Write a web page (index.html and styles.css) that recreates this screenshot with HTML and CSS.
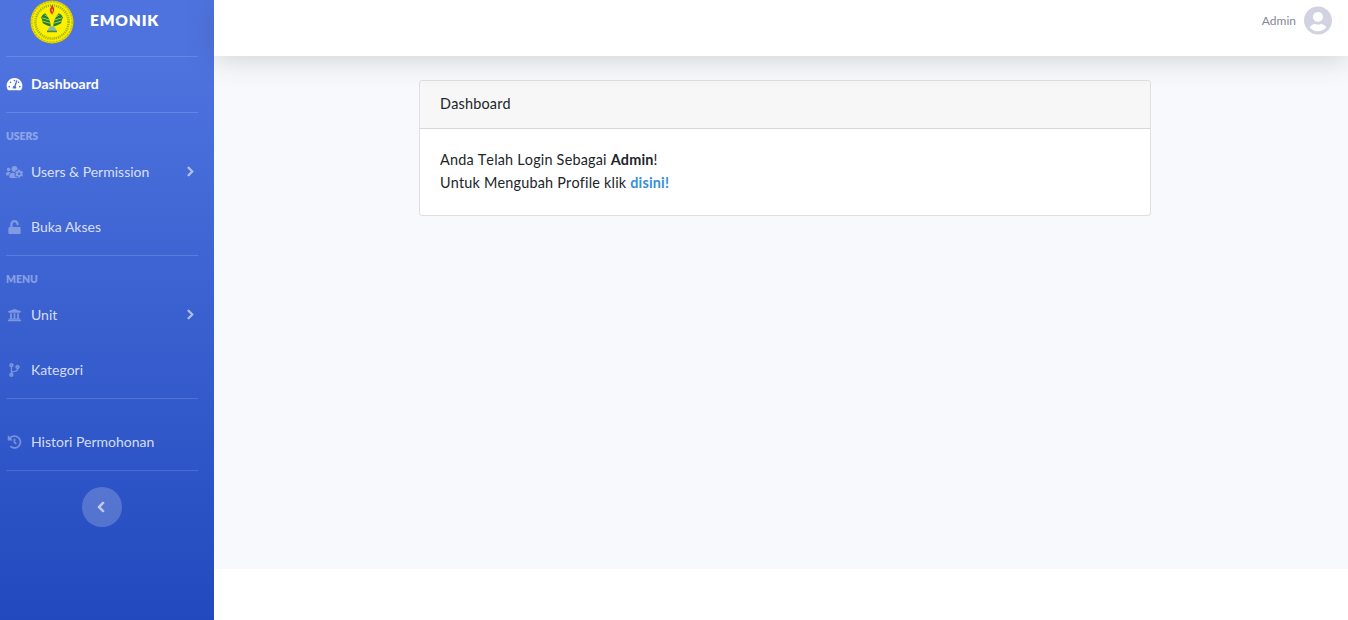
FILE: index.html
```html
<!DOCTYPE html>
<html lang="id">
<head>
<meta charset="utf-8">
<title>EMONIK</title>
<link rel="stylesheet" href="styles.css">
</head>
<body>
<div class="app">
  <aside class="sidebar">
    <a class="brand" href="#">
      <svg class="logo" viewBox="0 0 44 44" aria-hidden="true">
        <circle cx="22" cy="22" r="21.5" fill="#e3d800"/>
        <circle cx="22" cy="22" r="20.2" fill="#f7ec00" stroke="#cfc400" stroke-width="1.6" stroke-dasharray="2 1.2"/>
        <circle cx="22" cy="22" r="16.6" fill="none" stroke="#6f9a2c" stroke-width="2.4" stroke-dasharray="1.1 1" opacity=".7"/>
        <circle cx="22" cy="22" r="14.800" fill="#fdf000"/>
        <path d="M22 4.800c1.800 2.500 3 4.700 1.800 6.800-.6 1-1.200 2-1.500 3.200-1.500-1.500-2.900-3.200-2.400-5.200.3-1.600 1.600-3 2.100-4.800z" fill="#d9322a"/>
        <path d="M22 8.500c.8 1.200 1.100 2.400.3 3.500-.5-.7-1.100-1.700-.3-3.500z" fill="#f7ec00"/>
        <path d="M20.800 26.500c-.2-4.800-2-9.500-5.500-13.300-2.300 1-3.700 2.600-4.300 4.700 1.200.4 1.200 3.900 2 5.300 2.300 1.500 5.100 2.600 7.800 3.300z" fill="#1d7d3c"/>
        <path d="M23.200 26.500c.2-4.800 2-9.500 5.500-13.300 2.300 1 3.700 2.600 4.300 4.700-1.200.4-1.200 3.900-2 5.300-2.300 1.500-5.100 2.600-7.800 3.300z" fill="#1d7d3c"/>
        <path d="M12 17.800l7.500 2.200M12.500 21l7.500 2.200M14.500 14.800l5 2.700M29.500 14.800l-5 2.700M32 17.800l-7.500 2.200M31.500 21L24 23.200" stroke="#d8e23a" stroke-width=".8" fill="none"/>
        <path d="M18 30.500c0-2.600 1.700-4.200 4-4.200s4 1.600 4 4.200z" fill="#8db7a2"/>
        <path d="M17 30.500h10v1.700H17z" fill="#3f8a5a"/>
      </svg>
      <span class="brand-text">EMONIK</span>
    </a>
    <hr class="divider">
    <a class="item item-active" href="#">
      <svg class="icon" viewBox="0 0 576 512" aria-hidden="true"><path d="M288 32C128.940 32 0 160.940 0 320c0 52.800 14.250 102.260 39.060 144.800 5.610 9.620 16.300 15.200 27.440 15.200h443c11.140 0 21.830-5.580 27.440-15.200C561.750 422.260 576 372.800 576 320c0-159.060-128.940-288-288-288zm0 64c14.710 0 26.580 10.130 30.320 23.650-1.110 2.260-2.640 4.230-3.450 6.670l-9.220 27.670c-5.130 3.490-10.970 6.010-17.640 6.010-17.670 0-32-14.330-32-32S270.330 96 288 96zM96 384c-17.670 0-32-14.330-32-32s14.330-32 32-32 32 14.330 32 32-14.330 32-32 32zm48-160c-17.670 0-32-14.330-32-32s14.330-32 32-32 32 14.330 32 32-14.330 32-32 32zm246.770-72.410l-61.330 184C343.130 347.330 352 364.540 352 384c0 11.720-3.380 22.550-8.880 32H232.880c-5.500-9.450-8.880-20.280-8.880-32 0-33.940 26.500-61.430 59.900-63.590l61.340-184.010c4.170-12.560 17.730-19.450 30.360-15.170 12.570 4.190 19.350 17.790 15.170 30.360zm14.660 57.200l15.520-46.550c3.470-1.290 7.130-2.230 11.050-2.230 17.670 0 32 14.330 32 32s-14.330 32-32 32c-11.380-.01-20.890-6.280-26.570-15.220zM480 384c-17.670 0-32-14.330-32-32s14.330-32 32-32 32 14.330 32 32-14.330 32-32 32z"/></svg>
      <span>Dashboard</span>
    </a>
    <hr class="divider">
    <div class="heading">Users</div>
    <a class="item" href="#">
      <svg class="icon" viewBox="0 0 640 512" aria-hidden="true"><path d="M610.500 341.300c2.600-14.100 2.600-28.500 0-42.600l25.800-14.900c3-1.700 4.300-5.200 3.300-8.500-6.700-21.600-18.200-41.200-33.200-57.400-2.300-2.500-6-3.100-9-1.400l-25.800 14.900c-10.900-9.300-23.400-16.500-36.900-21.300v-29.800c0-3.400-2.400-6.400-5.700-7.100-22.300-5-45-4.800-66.200 0-3.300.7-5.700 3.700-5.700 7.100v29.800c-13.500 4.800-26 12-36.900 21.300l-25.800-14.900c-2.900-1.700-6.700-1.100-9 1.400-15 16.200-26.500 35.800-33.200 57.400-1 3.300.4 6.800 3.300 8.500l25.800 14.900c-2.600 14.100-2.600 28.500 0 42.600l-25.800 14.900c-3 1.700-4.300 5.200-3.300 8.500 6.700 21.600 18.200 41.100 33.200 57.400 2.300 2.500 6 3.100 9 1.400l25.800-14.900c10.900 9.300 23.400 16.500 36.900 21.300v29.800c0 3.400 2.400 6.400 5.700 7.100 22.300 5 45 4.800 66.200 0 3.300-.7 5.700-3.700 5.700-7.100v-29.800c13.500-4.800 26-12 36.900-21.300l25.800 14.900c2.900 1.700 6.700 1.100 9-1.400 15-16.200 26.500-35.800 33.200-57.400 1-3.300-.4-6.800-3.300-8.500l-25.800-14.900zM496 368.500c-26.800 0-48.500-21.800-48.500-48.500s21.800-48.500 48.500-48.500 48.500 21.800 48.500 48.500-21.700 48.500-48.500 48.500zM96 224c35.300 0 64-28.700 64-64s-28.700-64-64-64-64 28.700-64 64 28.700 64 64 64zm224 32c1.900 0 3.700-.5 5.600-.6 8.300-21.700 20.500-42.100 36.300-59.200 7.400-8 17.900-12.600 28.900-12.600 6.900 0 13.700 1.800 19.600 5.300l7.900 4.600c.8-.5 1.600-.9 2.400-1.400 7-14.600 11.200-30.800 11.200-48 0-61.900-50.100-112-112-112S208 82.100 208 144c0 61.900 50.100 112 112 112zm105.200 194.500c-2.300-1.200-4.600-2.600-6.800-3.900-8.200 4.800-15.300 9.800-27.500 9.800-10.900 0-21.400-4.600-28.900-12.600-18.300-19.800-32.300-43.900-40.200-69.600-10.700-34.500 24.900-49.700 25.800-50.300-.1-2.600-.1-5.200 0-7.800l-7.900-4.600c-3.800-2.200-7-5-9.800-8.100-3.300.2-6.500.6-9.800.6-24.600 0-47.600-6-68.500-16h-8.300C179.600 288 128 339.600 128 403.200V432c0 26.500 21.500 48 48 48h255.400c-3.700-6-6.200-12.800-6.200-20.300v-9.200zM173.100 274.600C161.500 263.100 145.600 256 128 256H64c-35.300 0-64 28.700-64 64v32c0 17.700 14.300 32 32 32h65.900c6.300-47.400 34.900-87.300 75.200-109.400z"/></svg>
      <span>Users &amp; Permission</span>
      <svg class="chevron" viewBox="0 0 320 512" aria-hidden="true"><path d="M285.476 272.971L91.132 467.314c-9.373 9.373-24.569 9.373-33.941 0l-22.667-22.667c-9.357-9.357-9.375-24.522-.04-33.901L188.505 256 34.484 101.255c-9.335-9.379-9.317-24.544.04-33.901l22.667-22.667c9.373-9.373 24.569-9.373 33.941 0L285.475 239.030c9.373 9.372 9.373 24.568.001 33.941z"/></svg>
    </a>
    <a class="item" href="#">
      <svg class="icon" viewBox="0 0 448 512" aria-hidden="true"><path d="M400 256H152V152.900c0-39.600 31.700-72.500 71.300-72.900 40-.4 72.700 32.100 72.700 72v16c0 13.300 10.700 24 24 24h32c13.300 0 24-10.700 24-24v-16C376 68 307.500-.3 223.500 0 139.500.3 72 69.500 72 153.500V256H48c-26.500 0-48 21.500-48 48v160c0 26.500 21.500 48 48 48h352c26.500 0 48-21.500 48-48V304c0-26.500-21.500-48-48-48z"/></svg>
      <span>Buka Akses</span>
    </a>
    <hr class="divider">
    <div class="heading">Menu</div>
    <a class="item" href="#">
      <svg class="icon" viewBox="0 0 512 512" aria-hidden="true"><path d="M496 128v16a8 8 0 0 1-8 8h-24v12c0 6.627-5.373 12-12 12H60c-6.627 0-12-5.373-12-12v-12H24a8 8 0 0 1-8-8v-16a8 8 0 0 1 4.941-7.392l232-88a7.996 7.996 0 0 1 6.118 0l232 88A8 8 0 0 1 496 128zm-24 304H40c-13.255 0-24 10.745-24 24v16a8 8 0 0 0 8 8h464a8 8 0 0 0 8-8v-16c0-13.255-10.745-24-24-24zM96 192v192H60c-6.627 0-12 5.373-12 12v20h416v-20c0-6.627-5.373-12-12-12h-36V192h-64v192h-64V192h-64v192h-64V192H96z"/></svg>
      <span>Unit</span>
      <svg class="chevron" viewBox="0 0 320 512" aria-hidden="true"><path d="M285.476 272.971L91.132 467.314c-9.373 9.373-24.569 9.373-33.941 0l-22.667-22.667c-9.357-9.357-9.375-24.522-.04-33.901L188.505 256 34.484 101.255c-9.335-9.379-9.317-24.544.04-33.901l22.667-22.667c9.373-9.373 24.569-9.373 33.941 0L285.475 239.030c9.373 9.372 9.373 24.568.001 33.941z"/></svg>
    </a>
    <a class="item" href="#">
      <svg class="icon" viewBox="0 0 384 512" aria-hidden="true"><path d="M384 144c0-44.200-35.800-80-80-80s-80 35.800-80 80c0 36.400 24.300 67.100 57.500 76.800-.6 16.100-4.200 28.500-11 36.900-15.400 19.200-49.300 22.400-85.200 25.700-28.200 2.600-57.400 5.400-81.300 16.900v-144c32.500-10.200 56-40.500 56-76.300 0-44.200-35.800-80-80-80S0 35.800 0 80c0 35.800 23.500 66.100 56 76.300v199.300C23.500 365.900 0 396.200 0 432c0 44.200 35.800 80 80 80s80-35.800 80-80c0-34-21.200-63.100-51.200-74.600 3.100-5.200 7.800-9.800 14.900-13.400 16.200-8.200 40.400-10.400 66.100-12.800 42.200-3.900 90-8.400 118.200-43.400 14-17.400 21.100-39.800 21.600-67.900 31.600-10.800 54.400-40.700 54.400-75.900zM80 64c8.800 0 16 7.200 16 16s-7.200 16-16 16-16-7.200-16-16 7.200-16 16-16zm0 384c-8.800 0-16-7.200-16-16s7.200-16 16-16 16 7.200 16 16-7.200 16-16 16zm224-320c8.800 0 16 7.200 16 16s-7.200 16-16 16-16-7.200-16-16 7.200-16 16-16z"/></svg>
      <span>Kategori</span>
    </a>
    <hr class="divider divider-spaced">
    <a class="item" href="#">
      <svg class="icon" viewBox="0 0 512 512" aria-hidden="true"><path d="M504 255.531c.253 136.640-111.180 248.372-247.820 248.468-59.015.042-113.223-20.530-155.822-54.911-11.077-8.940-11.905-25.541-1.839-35.607l11.267-11.267c8.609-8.609 22.353-9.551 31.891-1.984C173.062 425.135 212.781 440 256 440c101.705 0 184-82.311 184-184 0-101.705-82.311-184-184-184-48.814 0-93.149 18.969-126.068 49.932l50.754 50.754c10.080 10.080 2.941 27.314-11.313 27.314H24c-8.837 0-16-7.163-16-16V38.627c0-14.254 17.234-21.393 27.314-11.314l49.372 49.372C129.209 34.136 189.552 8 256 8c136.810 0 247.747 110.780 248 247.531zm-180.912 78.784l9.823-12.630c8.138-10.463 6.253-25.542-4.210-33.679L288 256.349V152c0-13.255-10.745-24-24-24h-16c-13.255 0-24 10.745-24 24v135.651l65.409 50.874c10.463 8.137 25.541 6.253 33.679-4.210z"/></svg>
      <span>Histori Permohonan</span>
    </a>
    <hr class="divider">
    <div class="toggle-row">
      <button class="toggle" type="button" aria-label="Tutup menu">
        <svg class="toggle-icon" viewBox="0 0 320 512" aria-hidden="true"><path d="M34.520 239.030L228.870 44.690c9.370-9.370 24.570-9.370 33.940 0l22.670 22.670c9.360 9.360 9.370 24.520.04 33.900L131.490 256l154.020 154.750c9.340 9.380 9.320 24.540-.04 33.900l-22.670 22.670c-9.370 9.370-24.570 9.370-33.940 0L34.520 272.970c-9.370-9.370-9.370-24.570 0-33.940z"/></svg>
      </button>
    </div>
  </aside>
  <div class="column">
    <header class="topbar">
      <span class="user-name">Admin</span>
      <svg class="avatar" viewBox="0 0 496 512" aria-hidden="true"><path d="M248 8C111 8 0 119 0 256s111 248 248 248 248-111 248-248S385 8 248 8zm0 96c48.600 0 88 39.400 88 88s-39.400 88-88 88-88-39.400-88-88 39.400-88 88-88zm0 344c-58.700 0-111.300-26.600-146.500-68.200 18.800-35.400 55.600-59.800 98.500-59.800 2.400 0 4.800.4 7.100 1.100 13 4.200 26.600 6.900 40.900 6.900 14.300 0 28-2.700 40.900-6.900 2.300-.7 4.700-1.100 7.100-1.100 42.900 0 79.700 24.400 98.500 59.800C359.300 421.400 306.700 448 248 448z"/></svg>
    </header>
    <main class="content">
      <section class="card">
        <div class="card-header">Dashboard</div>
        <div class="card-body">
          Anda Telah Login Sebagai <strong>Admin</strong>!<br>
          Untuk Mengubah Profile klik <a class="link" href="#">disini!</a>
        </div>
      </section>
    </main>
    <footer class="footer"></footer>
  </div>
</div>
</body>
</html>
```

FILE: styles.css
```css
* { box-sizing: border-box; }
html, body { height: 100%; }
body {
  margin: 0;
  background: #fff;
  color: #212529;
  font-family: "Lato", "Noto Sans", sans-serif;
  font-size: 14.400px;
  line-height: 23px;
  overflow: hidden;
}
a { text-decoration: none; }
.app { display: flex; height: 620px; }

.sidebar {
  flex: 0 0 214px;
  padding: 0 16px 0 6px;
  background: linear-gradient(180deg, #4e73df 10%, #224abe 100%);
}
.brand {
  display: flex;
  align-items: flex-start;
  height: 56px;
  margin-left: 24px;
  color: #fff;
  overflow: hidden;
}
.logo { flex: none; width: 44px; height: 44px; }
.brand-text {
  margin: 9px 0 0 16px;
  font-size: 15.500px;
  font-weight: 800;
  letter-spacing: .8px;
}
.divider {
  height: 1px;
  margin: 0;
  border: 0;
  background: rgba(255, 255, 255, .15);
}
.divider-spaced { margin-bottom: 16px; }
.item {
  display: flex;
  align-items: center;
  height: 55px;
  padding-bottom: 2px;
  color: rgba(255, 255, 255, .8);
  font-size: 14px;
  fill: rgba(255, 255, 255, .34);
}
.item-active { color: #fff; font-weight: 700; fill: #fff; }
.icon {
  flex: none;
  width: 17px;
  height: 14px;
  margin-right: 8px;
}
.chevron {
  flex: none;
  width: 7px;
  height: 11px;
  margin-left: auto;
  margin-right: 4px;
  fill: rgba(255, 255, 255, .55);
  stroke: rgba(255, 255, 255, .55);
  stroke-width: 30;
  paint-order: stroke;
}
.heading {
  padding-top: 15px;
  height: 32px;
  line-height: 16px;
  color: rgba(255, 255, 255, .4);
  font-size: 10.400px;
  font-weight: 800;
  text-transform: uppercase;
}
.toggle-row { display: flex; justify-content: center; padding-top: 16px; }
.toggle {
  display: flex;
  align-items: center;
  justify-content: center;
  width: 40px;
  height: 40px;
  padding: 0;
  border: 0;
  border-radius: 50%;
  background: rgba(255, 255, 255, .2);
}
.toggle-icon {
  width: 8px;
  height: 12px;
  margin-right: 2px;
  fill: rgba(255, 255, 255, .6);
  stroke: rgba(255, 255, 255, .6);
  stroke-width: 30;
}

.column { flex: 1; display: flex; flex-direction: column; min-width: 0; }
.topbar {
  position: relative;
  z-index: 1;
  display: flex;
  align-items: flex-start;
  justify-content: flex-end;
  flex: 0 0 56px;
  padding: 6px 16px 0 0;
  background: #fff;
  box-shadow: 0 4px 28px rgba(58, 59, 69, .2);
}
.user-name { margin: 3px 8px 0 0; color: #858796; font-size: 12px; }
.avatar { width: 28px; height: 29px; fill: #d1d3e2; }
.content {
  flex: 1;
  display: flex;
  justify-content: center;
  align-items: flex-start;
  padding: 24px 0 0 8px;
  background: #f8f9fc;
}
.card {
  width: 732px;
  border: 1px solid rgba(0, 0, 0, .125);
  border-radius: 4px;
  background: #fff;
  font-kerning: none;
  letter-spacing: .2px;
}
.card-header {
  padding: 11px 20px 13px;
  border-bottom: 1px solid rgba(0, 0, 0, .125);
  border-radius: 3px 3px 0 0;
  background: #f7f7f7;
}
.card-body { padding: 19px 20px 21px; }
strong { font-weight: 700; }
.link { color: #3490dc; font-weight: 700; }
.footer { flex: 0 0 51px; background: #fff; }
```
